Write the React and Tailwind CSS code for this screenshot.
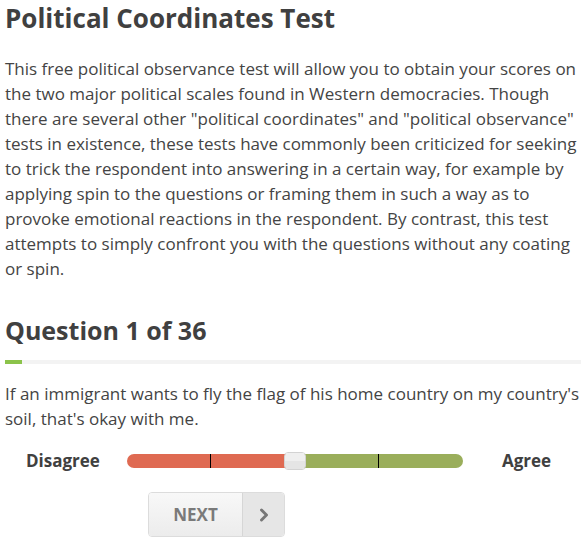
import { ChevronRight } from "lucide-react"

function Slider() {
  return (
    <div className="relative w-[336px] h-[14px]">
      <div className="flex h-full rounded-full overflow-hidden">
        <div className="flex-1 bg-[#df6a52]" />
        <div className="flex-1 bg-[#9aae5b]" />
      </div>
      <div className="absolute top-0 left-[83px] w-px h-full bg-black" />
      <div className="absolute top-0 left-[251px] w-px h-full bg-black" />
      <div className="absolute top-[-2px] left-[157px] w-[22px] h-[18px] rounded-[4px] border border-[#d3d3d3] overflow-hidden flex flex-col">
        <div className="h-1/2 bg-[#efefef]" />
        <div className="h-1/2 bg-[#e5e5e5]" />
      </div>
    </div>
  )
}

export default function App() {
  return (
    <div
      className="bg-white text-[#444] pl-[5px] pb-6"
      style={{ fontFamily: '"Open Sans", "Liberation Sans", sans-serif' }}
    >
      <h1 className="text-[26px] font-bold leading-[36px] text-[#404040]">
        Political Coordinates Test
      </h1>
      <p className="mt-[20px] text-[17px] leading-[25px] pr-[3px]">
        This free political observance test will allow you to obtain your scores on the two major
        political scales found in Western democracies. Though there are several other "political
        coordinates" and "political observance" tests in existence, these tests have commonly been
        criticized for seeking to trick the respondent into answering in a certain way, for example
        by applying spin to the questions or framing them in such a way as to provoke emotional
        reactions in the respondent. By contrast, this test attempts to simply confront you with the
        questions without any coating or spin.
      </p>

      <h2 className="mt-[31px] text-[25px] font-bold leading-[36px] text-[#404040]">
        Question 1 of 36
      </h2>
      <div className="mt-[12px] h-[4px] bg-[#f3f3f3] flex">
        <div className="w-[17px] h-full bg-[#8bc34a]" />
      </div>

      <p className="mt-[17px] text-[17px] leading-[25px]">
        If an immigrant wants to fly the flag of his home country on my country's soil, that's okay
        with me.
      </p>

      <div className="mt-[17px] flex items-center h-[25px]">
        <span className="ml-[21px] font-bold text-[17px] text-[#404040]">Disagree</span>
        <div className="ml-[27px]">
          <Slider />
        </div>
        <span className="ml-[39px] font-bold text-[17px] text-[#404040]">Agree</span>
      </div>

      <div className="mt-[19px] ml-[143px] flex w-[137px] h-[45px] rounded-[4px] border border-[#dcdcdc] overflow-hidden">
        <div className="w-[93px] flex items-center justify-center bg-gradient-to-b from-[#f8f8f8] to-[#ececec] font-bold text-[17px] text-[#7a7a7a]">
          NEXT
        </div>
        <div className="flex-1 flex items-center justify-center border-l border-[#d6d6d6] bg-[#e6e6e6] text-[#777]">
          <ChevronRight size={20} strokeWidth={3.5} />
        </div>
      </div>
    </div>
  )
}
